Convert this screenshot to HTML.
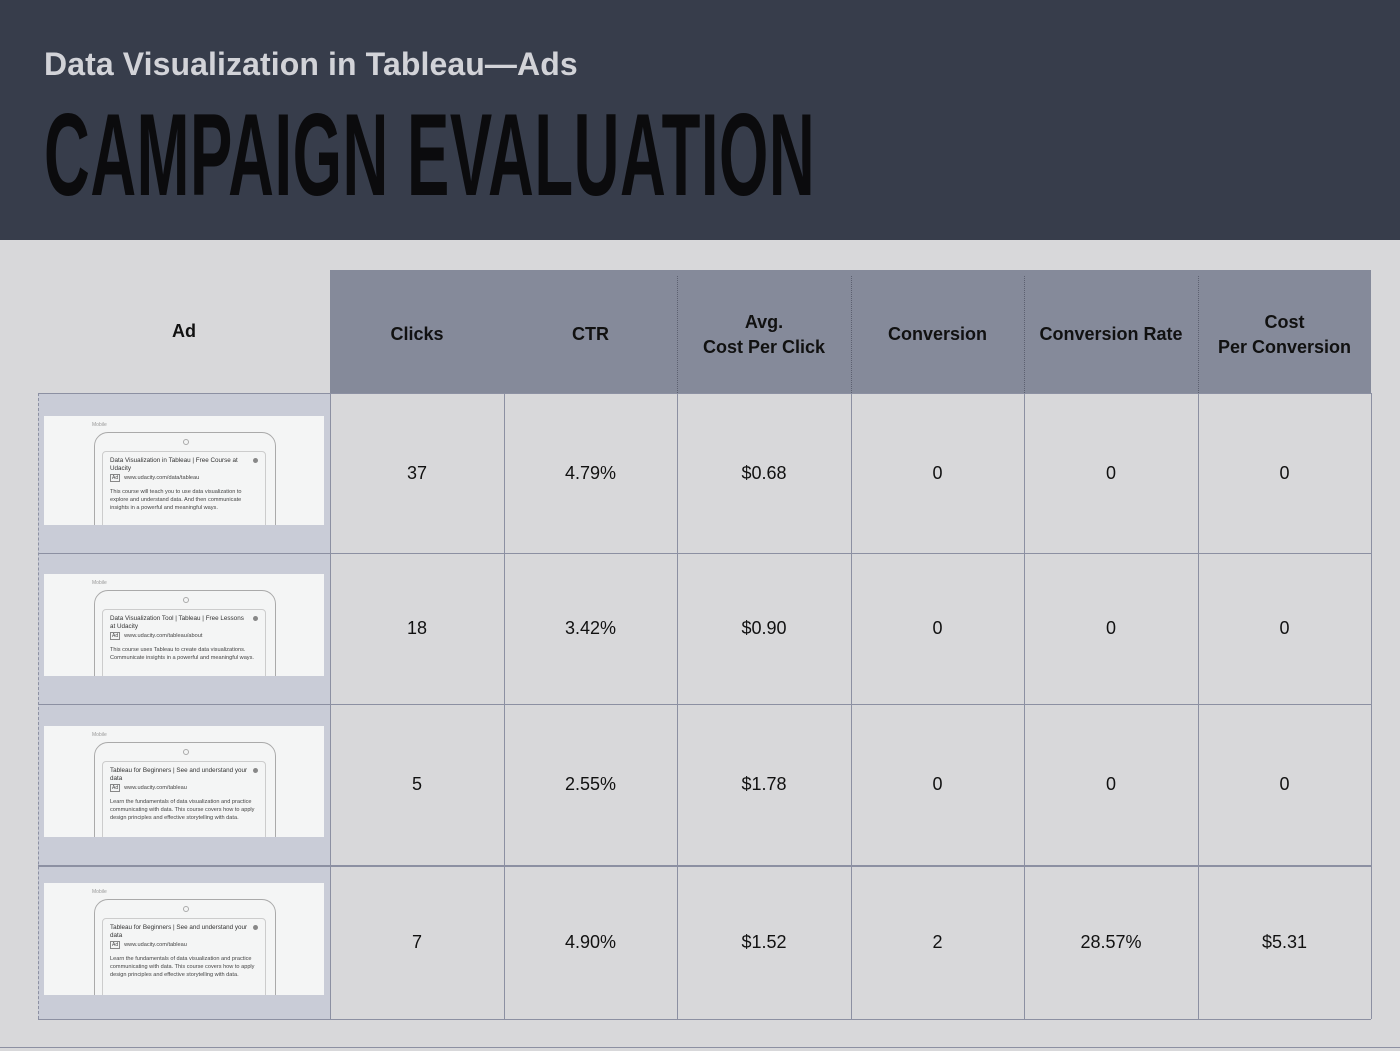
<!DOCTYPE html>
<html><head><meta charset="utf-8"><style>
*{margin:0;padding:0;box-sizing:border-box}
html,body{width:1400px;height:1051px;overflow:hidden}
body{background:#d8d8da;position:relative;font-family:"Liberation Sans",sans-serif}
.hdr{position:absolute;left:0;top:0;width:1400px;height:240px;background:#373d4b}
.sub{position:absolute;left:44px;top:46px;font-size:32px;font-weight:bold;color:#d2d3d8;letter-spacing:0.1px}
.title{position:absolute;left:44px;top:96px;font-size:117px;font-weight:bold;color:#0b0b0d;transform:scaleX(0.542);transform-origin:0 0;white-space:nowrap;line-height:117px;letter-spacing:1px}
.hbg{position:absolute;left:330px;top:270px;width:1041px;height:123px;background:#858a9a}
.hl{position:absolute;top:276px;height:117px;border-left:1px dotted #5c6070}
.th{position:absolute;top:270px;height:123px;display:flex;align-items:center;justify-content:center;text-align:center;font-weight:bold;font-size:18px;line-height:25px;color:#111}
.adcol{position:absolute;left:38px;top:393px;width:292px;height:626px;background:#c9ccd7}
.vl{position:absolute;top:393px;height:626px;border-left:1px solid #8c90a2}
.hr{position:absolute;left:38px;width:1333px;border-top:1px solid #8c90a2}
.td{position:absolute;display:flex;align-items:center;justify-content:center;font-size:18px;color:#111}
.ad{position:absolute;left:44px;width:280px;background:#f4f5f5;overflow:hidden}
.ad .m{position:absolute;left:48px;top:6px;font-size:5px;color:#999}
.ad .ph{position:absolute;left:50px;top:16px;width:182px;height:120px;border:1.5px solid #aaa;border-radius:14px}
.ad .ph:before{content:"";position:absolute;left:88px;top:6px;width:4px;height:4px;border:1px solid #aaa;border-radius:50%}
.ad .cd{position:absolute;left:58px;top:35px;width:164px;height:120px;border:1px solid #ccc;border-radius:4px;padding:5px 7px;font-size:5.6px;color:#444;line-height:8.2px;white-space:nowrap}
.ad .cd b{font-weight:normal;font-size:6.3px;color:#333;display:block}
.ad .cd i{font-style:normal;display:block;margin:1px 0 5px}
.ad .cd i span{border:1px solid #888;font-size:5px;padding:0 1px;margin-right:4px}
.ad .cd .g{position:absolute;right:7px;top:6px;width:5px;height:5px;border-radius:50%;background:#888}
</style></head><body>
<div class="hdr"><div class="sub">Data Visualization in Tableau—Ads</div><div class="title">CAMPAIGN EVALUATION</div></div>
<div class="hbg"></div>
<div class="hl" style="left:677px"></div><div class="hl" style="left:851px"></div><div class="hl" style="left:1024px"></div><div class="hl" style="left:1198px"></div>
<div class="th" style="left:38px;width:292px;top:270px">Ad</div>
<div class="th" style="left:330px;width:174px;top:273px">Clicks</div>
<div class="th" style="left:504px;width:173px;top:273px">CTR</div>
<div class="th" style="left:677px;width:174px;top:273px">Avg.<br>Cost Per Click</div>
<div class="th" style="left:851px;width:173px;top:273px">Conversion</div>
<div class="th" style="left:1024px;width:174px;top:273px">Conversion Rate</div>
<div class="th" style="left:1198px;width:173px;top:273px">Cost<br>Per Conversion</div>
<div class="adcol"></div>
<div class="vl" style="left:38px;border-left-style:dashed"></div>
<div class="vl" style="left:330px"></div><div class="vl" style="left:504px"></div><div class="vl" style="left:677px"></div><div class="vl" style="left:851px"></div><div class="vl" style="left:1024px"></div><div class="vl" style="left:1198px"></div><div class="vl" style="left:1371px"></div>
<div class="hr" style="top:393px"></div><div class="hr" style="top:553px"></div><div class="hr" style="top:704px"></div><div class="hr" style="top:865px;border-top-width:2px"></div><div class="hr" style="top:1019px"></div>
<div class="hr" style="top:1047px;left:0;width:1400px"></div>

<div class="ad" style="top:416px;height:109px"><div class="m">Mobile</div><div class="ph"></div><div class="cd"><div class="g"></div><b>Data Visualization in Tableau | Free Course at<br>Udacity</b><i><span>Ad</span>www.udacity.com/data/tableau</i>This course will teach you to use data visualization to<br>explore and understand data. And then communicate<br>insights in a powerful and meaningful ways.</div></div>
<div class="ad" style="top:574px;height:102px"><div class="m">Mobile</div><div class="ph"></div><div class="cd"><div class="g"></div><b>Data Visualization Tool | Tableau | Free Lessons<br>at Udacity</b><i><span>Ad</span>www.udacity.com/tableau/about</i>This course uses Tableau to create data visualizations.<br>Communicate insights in a powerful and meaningful ways.</div></div>
<div class="ad" style="top:726px;height:111px"><div class="m">Mobile</div><div class="ph"></div><div class="cd"><div class="g"></div><b>Tableau for Beginners | See and understand your<br>data</b><i><span>Ad</span>www.udacity.com/tableau</i>Learn the fundamentals of data visualization and practice<br>communicating with data. This course covers how to apply<br>design principles and effective storytelling with data.</div></div>
<div class="ad" style="top:883px;height:112px"><div class="m">Mobile</div><div class="ph"></div><div class="cd"><div class="g"></div><b>Tableau for Beginners | See and understand your<br>data</b><i><span>Ad</span>www.udacity.com/tableau</i>Learn the fundamentals of data visualization and practice<br>communicating with data. This course covers how to apply<br>design principles and effective storytelling with data.</div></div>

<div class="td" style="left:330px;top:393px;width:174px;height:160px">37</div>
<div class="td" style="left:504px;top:393px;width:173px;height:160px">4.79%</div>
<div class="td" style="left:677px;top:393px;width:174px;height:160px">$0.68</div>
<div class="td" style="left:851px;top:393px;width:173px;height:160px">0</div>
<div class="td" style="left:1024px;top:393px;width:174px;height:160px">0</div>
<div class="td" style="left:1198px;top:393px;width:173px;height:160px">0</div>

<div class="td" style="left:330px;top:553px;width:174px;height:151px">18</div>
<div class="td" style="left:504px;top:553px;width:173px;height:151px">3.42%</div>
<div class="td" style="left:677px;top:553px;width:174px;height:151px">$0.90</div>
<div class="td" style="left:851px;top:553px;width:173px;height:151px">0</div>
<div class="td" style="left:1024px;top:553px;width:174px;height:151px">0</div>
<div class="td" style="left:1198px;top:553px;width:173px;height:151px">0</div>

<div class="td" style="left:330px;top:704px;width:174px;height:161px">5</div>
<div class="td" style="left:504px;top:704px;width:173px;height:161px">2.55%</div>
<div class="td" style="left:677px;top:704px;width:174px;height:161px">$1.78</div>
<div class="td" style="left:851px;top:704px;width:173px;height:161px">0</div>
<div class="td" style="left:1024px;top:704px;width:174px;height:161px">0</div>
<div class="td" style="left:1198px;top:704px;width:173px;height:161px">0</div>

<div class="td" style="left:330px;top:866px;width:174px;height:153px">7</div>
<div class="td" style="left:504px;top:866px;width:173px;height:153px">4.90%</div>
<div class="td" style="left:677px;top:866px;width:174px;height:153px">$1.52</div>
<div class="td" style="left:851px;top:866px;width:173px;height:153px">2</div>
<div class="td" style="left:1024px;top:866px;width:174px;height:153px">28.57%</div>
<div class="td" style="left:1198px;top:866px;width:173px;height:153px">$5.31</div>
</body></html>
